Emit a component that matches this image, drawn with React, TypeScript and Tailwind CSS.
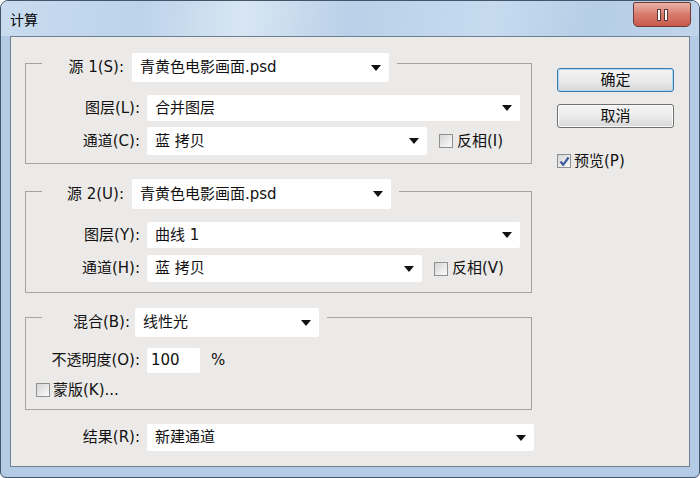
import React from 'react';

const Arrow = () => (
  <svg width="10" height="6" viewBox="0 0 10 6" className="shrink-0">
    <path d="M0 0 L10 0 L5 6 Z" fill="#111" />
  </svg>
);

const Dropdown: React.FC<{ value: string; className: string }> = ({ value, className }) => (
  <div className={`flex items-center justify-between bg-white rounded-[2px] pl-[8px] pr-[8px] ${className}`}>
    <span>{value}</span>
    <Arrow />
  </div>
);

const CheckBox: React.FC<{ checked?: boolean }> = ({ checked }) => (
  <span className="w-[14px] h-[14px] shrink-0 border border-[#8e8f8f] bg-gradient-to-br from-[#d6d6d6] to-[#fbfbfb] flex items-center justify-center">
    {checked && (
      <svg width="11" height="11" viewBox="0 0 11 11">
        <path d="M1.5 5.5 L4.2 8.8 L9.5 1.5" stroke="#3d5a9e" strokeWidth="2.2" fill="none" />
      </svg>
    )}
  </span>
);

const Button: React.FC<{ label: string; primary?: boolean }> = ({ label, primary }) => (
  <div
    className={`w-[117px] h-[24px] flex items-center justify-center rounded-[3px] border bg-gradient-to-b from-[#f4f4f4] via-[#ebebeb] to-[#d8d8d8] ${
      primary ? 'border-[#3d7bad] shadow-[inset_0_0_0_1px_#a8d8f5]' : 'border-[#707070] shadow-[inset_0_0_0_1px_#fcfcfc]'
    }`}
  >
    {label}
  </div>
);

const Label: React.FC<{ text: string; className: string }> = ({ text, className }) => (
  <span className={`text-right shrink-0 whitespace-nowrap ${className}`}>{text}</span>
);

export default function App() {
  return (
    <div className="w-[700px] h-[478px] flex flex-col rounded-t-[8px] rounded-b-[6px] border border-[#41556b] bg-[#b3cbe5] text-[15px] text-[#111] font-[family-name:'DejaVu_Sans','Noto_Sans_CJK_SC',sans-serif] overflow-hidden">
      {/* title bar */}
      <div className="h-[35px] shrink-0 flex justify-between bg-[linear-gradient(100deg,#c9dcef_0%,#bcd3ea_20%,#d8e6f3_35%,#b9d0e8_50%,#c6dbee_70%,#b5cde6_85%,#c0d5eb_100%)]">
        <span className="pl-[9px] pt-[9px] text-[14px] text-black">计算</span>
        <div className="mt-[1px] mr-[8px] w-[58px] h-[25px] rounded-b-[5px] rounded-t-[2px] border border-[#6b3a36] bg-gradient-to-b from-[#eab2a8] via-[#d77a6d] to-[#c9594b] flex items-center justify-center gap-[3px]">
          <span className="w-[4px] h-[12px] bg-white border border-[#5a3a36]" />
          <span className="w-[4px] h-[12px] bg-white border border-[#5a3a36]" />
        </div>
      </div>

      {/* client area */}
      <div className="flex-1 mx-[9px] mb-[10px] border border-[#6e7f92] bg-[#eceae8] flex">
        <div className="pl-[14px] flex flex-col">
          {/* source 1 */}
          <div className="mt-[26px] w-[507px] border border-[#a3a3a3] flex flex-col pb-[8px]">
            <div className="-mt-[11px] ml-[16px] w-[355px] h-[29px] bg-[#eceae8] flex items-center">
              <Label text="源 1(S):" className="w-[82px]" />
              <Dropdown value="青黄色电影画面.psd" className="ml-[8px] w-[257px] h-[29px]" />
            </div>
            <div className="mt-[13px] flex items-center">
              <Label text="图层(L):" className="w-[114px]" />
              <Dropdown value="合并图层" className="ml-[7px] w-[373px] h-[26px]" />
            </div>
            <div className="mt-[6px] flex items-center">
              <Label text="通道(C):" className="w-[114px]" />
              <Dropdown value="蓝 拷贝" className="ml-[7px] w-[280px] h-[28px]" />
              <span className="ml-[12px]"><CheckBox /></span>
              <span className="ml-[4px]">反相(I)</span>
            </div>
          </div>

          {/* source 2 */}
          <div className="mt-[27px] w-[507px] border border-[#a3a3a3] flex flex-col pb-[10px]">
            <div className="-mt-[13px] ml-[16px] w-[357px] h-[30px] bg-[#eceae8] flex items-center">
              <Label text="源 2(U):" className="w-[82px]" />
              <Dropdown value="青黄色电影画面.psd" className="ml-[8px] w-[259px] h-[30px]" />
            </div>
            <div className="mt-[13px] flex items-center">
              <Label text="图层(Y):" className="w-[114px]" />
              <Dropdown value="曲线 1" className="ml-[7px] w-[373px] h-[26px]" />
            </div>
            <div className="mt-[7px] flex items-center">
              <Label text="通道(H):" className="w-[114px]" />
              <Dropdown value="蓝 拷贝" className="ml-[7px] w-[275px] h-[27px]" />
              <span className="ml-[12px]"><CheckBox /></span>
              <span className="ml-[4px]">反相(V)</span>
            </div>
          </div>

          {/* blending */}
          <div className="mt-[24px] w-[507px] h-[93px] border border-[#a3a3a3] flex flex-col">
            <div className="-mt-[10px] ml-[16px] w-[285px] h-[29px] bg-[#eceae8] flex items-center">
              <Label text="混合(B):" className="w-[88px]" />
              <Dropdown value="线性光" className="ml-[5px] w-[184px] h-[29px]" />
            </div>
            <div className="mt-[11px] flex items-center">
              <Label text="不透明度(O):" className="w-[114px]" />
              <div className="ml-[7px] w-[53px] h-[25px] bg-white rounded-[2px] pl-[4px] flex items-center">100</div>
              <span className="ml-[11px]">%</span>
            </div>
            <div className="mt-[6px] ml-[10px] flex items-center">
              <CheckBox />
              <span className="ml-[3px]">蒙版(K)...</span>
            </div>
          </div>

          {/* result */}
          <div className="mt-[14px] flex items-center">
            <Label text="结果(R):" className="w-[115px]" />
            <Dropdown value="新建通道" className="ml-[7px] w-[387px] h-[27px]" />
          </div>
        </div>

        {/* buttons */}
        <div className="ml-[23px] pt-[31px] flex flex-col">
          <Button label="确定" primary />
          <div className="mt-[12px]">
            <Button label="取消" />
          </div>
          <div className="mt-[22px] flex items-center">
            <CheckBox checked />
            <span className="ml-[3px]">预览(P)</span>
          </div>
        </div>
      </div>
    </div>
  );
}
